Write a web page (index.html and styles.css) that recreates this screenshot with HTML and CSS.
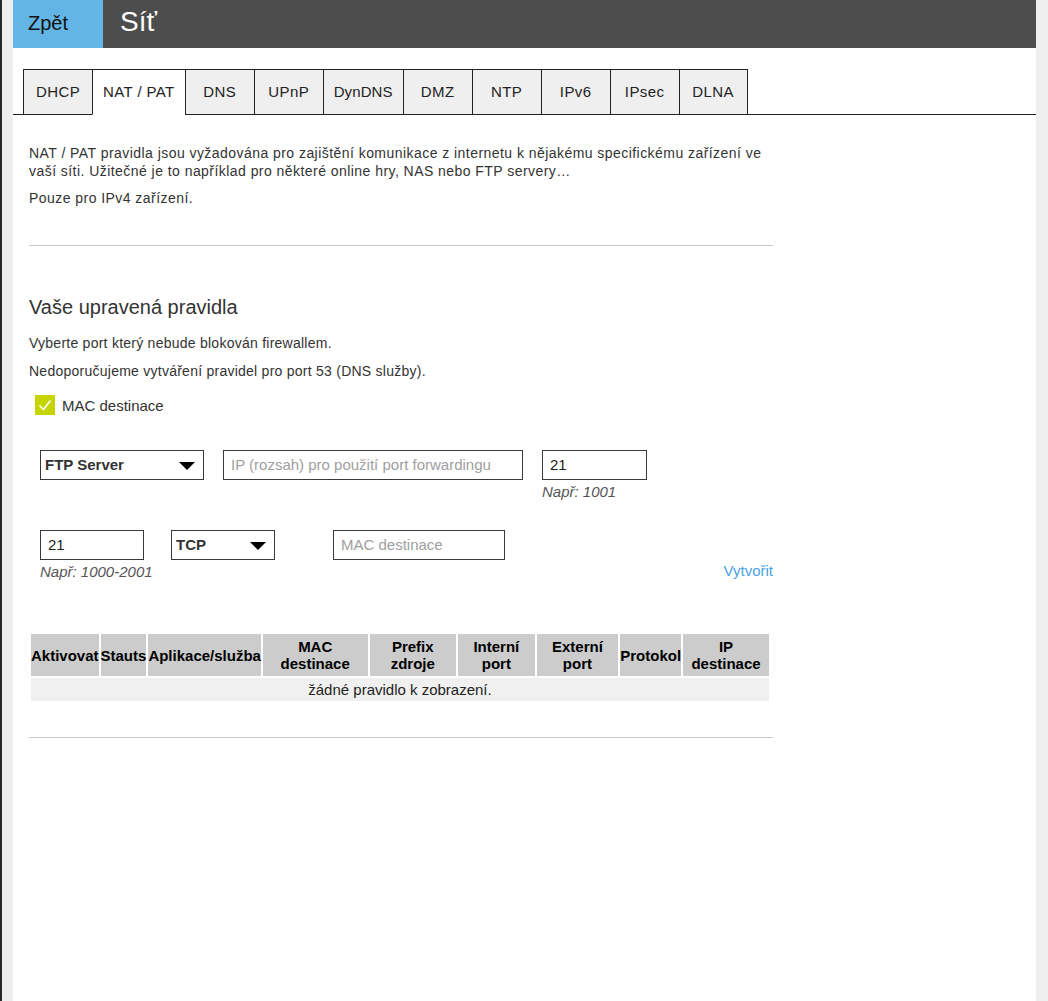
FILE: index.html
```html
<!DOCTYPE html>
<html lang="cs">
<head>
<meta charset="utf-8">
<title>Síť</title>
<link rel="stylesheet" href="styles.css">
</head>
<body>
<div class="page">
  <header class="topbar">
    <a class="back">Zpět</a>
    <h1 class="title">Síť</h1>
  </header>
  <nav class="tabs">
    <div class="tab">DHCP</div>
    <div class="tab active">NAT / PAT</div>
    <div class="tab">DNS</div>
    <div class="tab">UPnP</div>
    <div class="tab tight">DynDNS</div>
    <div class="tab">DMZ</div>
    <div class="tab">NTP</div>
    <div class="tab">IPv6</div>
    <div class="tab">IPsec</div>
    <div class="tab last">DLNA</div>
  </nav>
  <main class="content">
    <p class="intro">NAT / PAT pravidla jsou vyžadována pro zajištění komunikace z internetu k nějakému specifickému zařízení ve vaší síti. Užitečné je to například pro některé online hry, NAS nebo FTP servery…</p>
    <p class="intro">Pouze pro IPv4 zařízení.</p>
    <hr class="sep first">
    <h2 class="heading">Vaše upravená pravidla</h2>
    <p class="note">Vyberte port který nebude blokován firewallem.</p>
    <p class="note">Nedoporučujeme vytváření pravidel pro port 53 (DNS služby).</p>
    <label class="check">
      <span class="box"><svg width="20" height="20" viewBox="0 0 20 20"><path d="M4.5 10.5 L8.5 14.5 L15.5 5.5" fill="none" stroke="#fff" stroke-width="1.6"/></svg></span>
      <span>MAC destinace</span>
    </label>
    <div class="row row1">
      <div class="field w164"><div class="select">FTP Server<span class="tri"></span></div></div>
      <div class="field w300"><div class="input ph">IP (rozsah) pro použití port forwardingu</div></div>
      <div class="field w105"><div class="input">21</div><div class="hint">Např: 1001</div></div>
    </div>
    <div class="row row2">
      <div class="field w104"><div class="input">21</div><div class="hint">Např: 1000-2001</div></div>
      <div class="field w104 g27"><div class="select">TCP<span class="tri"></span></div></div>
      <div class="field w172 g58"><div class="input ph">MAC destinace</div></div>
      <a class="create">Vytvořit</a>
    </div>
    <table class="rules">
      <thead>
        <tr>
          <th>Aktivovat</th>
          <th>Stauts</th>
          <th>Aplikace/služba</th>
          <th>MAC destinace</th>
          <th>Prefix zdroje</th>
          <th>Interní port</th>
          <th>Externí port</th>
          <th>Protokol</th>
          <th>IP destinace</th>
        </tr>
      </thead>
      <tbody>
        <tr><td colspan="9">žádné pravidlo k zobrazení.</td></tr>
      </tbody>
    </table>
    <hr class="sep last">
  </main>
</div>
</body>
</html>
```
FILE: styles.css
```css
html, body {
  margin: 0;
  padding: 0;
  height: 100%;
}
body {
  background: #efefef;
  border-left: 2px solid #2a2a2a;
  box-sizing: border-box;
  font-family: "Liberation Sans", Arial, sans-serif;
  font-size: 15px;
  color: #333;
}
.page {
  margin-left: 11px;
  width: 1023px;
  min-height: 1001px;
  background: #fff;
}
.topbar {
  display: flex;
  height: 48px;
  background: #4d4d4d;
}
.back {
  width: 90px;
  background: #63b5e6;
  color: #111;
  font-size: 20px;
  line-height: 46px;
  padding-left: 15px;
  box-sizing: border-box;
}
.title {
  margin: 0 0 0 17px;
  color: #fff;
  font-size: 28px;
  font-weight: normal;
  line-height: 44px;
}
.tabs {
  display: flex;
  margin-top: 21px;
  padding-left: 10px;
  border-bottom: 1px solid #222;
}
.tab {
  min-width: 69px;
  box-sizing: border-box;
  height: 46px;
  margin-bottom: -1px;
  padding: 0 10px;
  border: 1px solid #222;
  border-right: none;
  border-bottom: 1px solid #222;
  background: #efefef;
  color: #222;
  font-size: 15px;
  letter-spacing: 0.4px;
  line-height: 44px;
  text-align: center;
}
.tab.tight {
  padding: 0 10px;
  letter-spacing: 0.1px;
}
.tab.last {
  border-right: 1px solid #222;
}
.tab.active {
  background: #fff;
  border-bottom-color: #fff;
}
.content {
  width: 744px;
  padding: 29px 0 0 16px;
}
.intro {
  margin: 0 0 9px;
  font-size: 14px;
  letter-spacing: 0.45px;
  line-height: 18px;
}
.sep {
  border: none;
  border-top: 1px solid #c8c8c8;
  margin: 0;
}
.sep.first {
  margin-top: 38px;
}
.heading {
  margin: 49px 0 15px;
  font-size: 20px;
  font-weight: normal;
  line-height: 24px;
  color: #333;
}
.note {
  margin: 0 0 10px;
  font-size: 14px;
  letter-spacing: 0.25px;
  line-height: 18px;
}
.check {
  display: flex;
  align-items: center;
  gap: 7px;
  margin: 15px 0 0 6px;
  height: 20px;
  font-size: 15px;
}
.box {
  width: 20px;
  height: 20px;
  background: #c6d500;
  display: block;
}
.box svg {
  display: block;
}
.row {
  display: flex;
  align-items: flex-start;
  padding-left: 11px;
}
.row1 {
  margin-top: 35px;
  gap: 19px;
}
.row2 {
  margin-top: 29px;
}
.g27 { margin-left: 27px; }
.g58 { margin-left: 58px; }
.w164 { width: 164px; }
.w300 { width: 300px; }
.w105 { width: 105px; }
.w104 { width: 104px; }
.w172 { width: 172px; }
.select, .input {
  position: relative;
  height: 30px;
  box-sizing: border-box;
  border: 1px solid #3a3a3a;
  line-height: 28px;
  font-size: 15px;
  color: #222;
  white-space: nowrap;
  overflow: hidden;
}
.select {
  padding-left: 4px;
  font-weight: bold;
  color: #333;
}
.input {
  padding-left: 7px;
}
.input.ph {
  color: #a0a0a0;
}
.tri {
  position: absolute;
  right: 8px;
  top: 11px;
  width: 0;
  height: 0;
  border-left: 8px solid transparent;
  border-right: 8px solid transparent;
  border-top: 8px solid #000;
}
.hint {
  margin-top: 3px;
  font-style: italic;
  color: #555;
  line-height: 18px;
  white-space: nowrap;
}
.create {
  margin-left: auto;
  margin-top: 32px;
  color: #4aa3df;
  line-height: 18px;
}
.rules {
  margin-top: 51px;
  width: 742px;
  border-spacing: 2px;
  font-size: 15px;
}
.rules th {
  background: #cccccc;
  color: #000;
  font-weight: bold;
  padding: 4px 0;
  line-height: 17px;
  text-align: center;
}
.rules td {
  background: #f0f0f0;
  color: #222;
  text-align: center;
  height: 23px;
  padding: 0;
}
.sep.last {
  margin-top: 34px;
}
```
